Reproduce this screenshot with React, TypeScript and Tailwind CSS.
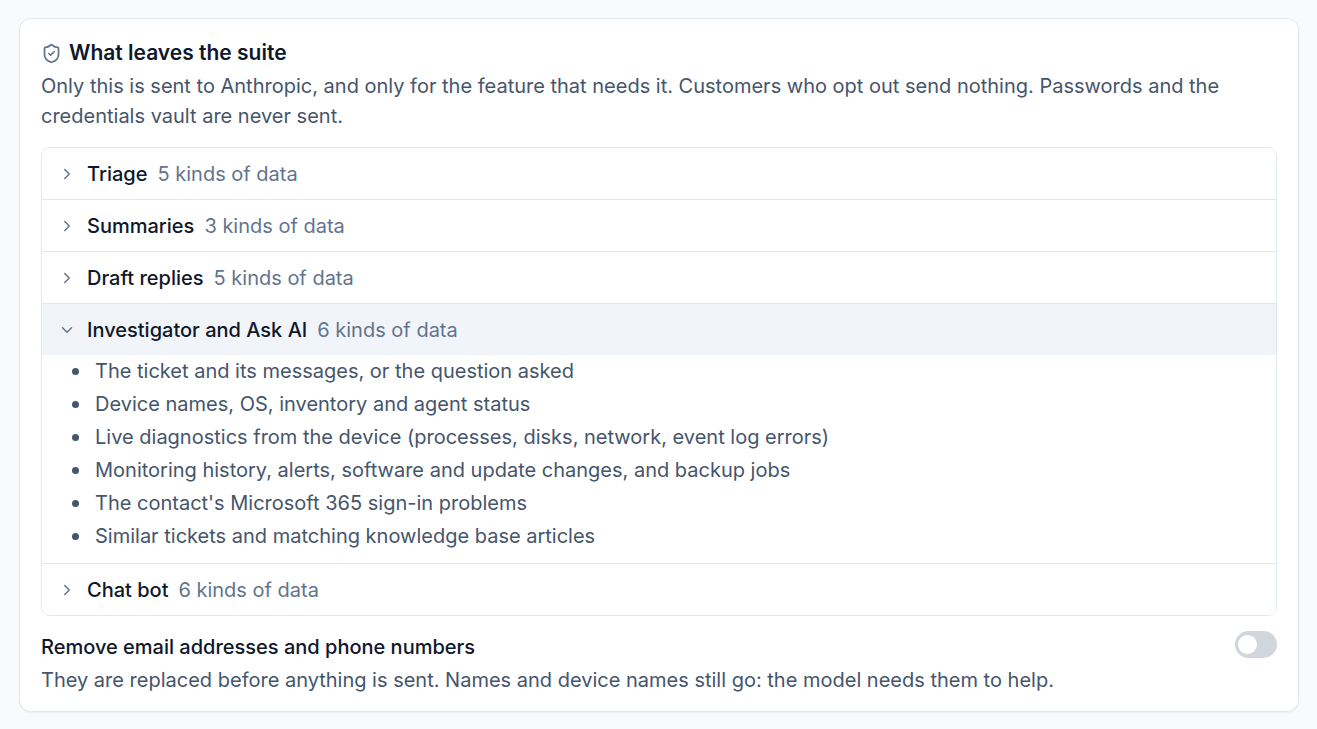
import { useState } from "react";
import { ChevronDown, ChevronRight, ShieldCheck } from "lucide-react";

type Feature = { name: string; items: string[]; count: number };

const features: Feature[] = [
  { name: "Triage", count: 5, items: [] },
  { name: "Summaries", count: 3, items: [] },
  { name: "Draft replies", count: 5, items: [] },
  {
    name: "Investigator and Ask AI",
    count: 6,
    items: [
      "The ticket and its messages, or the question asked",
      "Device names, OS, inventory and agent status",
      "Live diagnostics from the device (processes, disks, network, event log errors)",
      "Monitoring history, alerts, software and update changes, and backup jobs",
      "The contact's Microsoft 365 sign-in problems",
      "Similar tickets and matching knowledge base articles",
    ],
  },
  { name: "Chat bot", count: 6, items: [] },
];

function FeatureRow({ feature, open, onToggle }: { feature: Feature; open: boolean; onToggle: () => void }) {
  const Chevron = open ? ChevronDown : ChevronRight;
  return (
    <li>
      <button
        type="button"
        aria-expanded={open}
        onClick={onToggle}
        className={`flex w-full items-center px-4 pt-3 pb-[11px] text-left text-[20px] leading-7 ${open ? "bg-slate-100" : "bg-white"}`}
      >
        <Chevron className="mr-[11px] size-[18px] shrink-0 text-slate-500" strokeWidth={2} />
        <span className="mr-[10px] font-medium text-slate-900">{feature.name}</span>
        <span className="text-slate-500">{feature.count} kinds of data</span>
      </button>
      {open && feature.items.length > 0 && (
        <ul className="pb-[10px] pl-[30px] text-[20px] leading-[33px] text-slate-600">
          {feature.items.map((item) => (
            <li
              key={item}
              className="flex items-center gap-4 before:size-[7px] before:shrink-0 before:rounded-full before:bg-slate-600"
            >
              {item}
            </li>
          ))}
        </ul>
      )}
    </li>
  );
}

export default function App() {
  const [openName, setOpenName] = useState("Investigator and Ask AI");
  const [redact, setRedact] = useState(false);

  return (
    <main className="min-h-screen bg-slate-50 py-[18px] pr-[18px] pl-[19px] font-['Inter',sans-serif] antialiased">
      <section className="rounded-xl border border-slate-200 bg-white px-[21px] pt-5 pb-[14px] shadow-xs">
        <h2 className="flex items-center gap-[7px] text-[21px] leading-7 font-semibold text-slate-900">
          <ShieldCheck className="size-[21px] text-slate-500" strokeWidth={2} />
          What leaves the suite
        </h2>
        <p className="mt-1 text-[20px] leading-[30px] text-slate-600">
          Only this is sent to Anthropic, and only for the feature that needs it. Customers who opt out send nothing.
          Passwords and the credentials vault are never sent.
        </p>
        <ul className="mt-4 divide-y divide-slate-200 overflow-hidden rounded-[9px] border border-slate-200">
          {features.map((feature) => (
            <FeatureRow
              key={feature.name}
              feature={feature}
              open={openName === feature.name}
              onToggle={() => setOpenName(openName === feature.name ? "" : feature.name)}
            />
          ))}
        </ul>
        <div className="mt-[15px] flex items-start justify-between gap-6 text-[20px] leading-[33px]">
          <div>
            <label htmlFor="redact" className="block font-medium text-slate-900">
              Remove email addresses and phone numbers
            </label>
            <p id="redact-help" className="text-slate-600">
              They are replaced before anything is sent. Names and device names still go: the model needs them to help.
            </p>
          </div>
          <input
            id="redact"
            type="checkbox"
            role="switch"
            aria-describedby="redact-help"
            checked={redact}
            onChange={(event) => setRedact(event.target.checked)}
            className="h-[27px] w-[42px] shrink-0 appearance-none rounded-full bg-gray-300 px-[3px] py-1 before:block before:size-[19px] before:rounded-full before:bg-white checked:bg-blue-600 checked:before:translate-x-4"
          />
        </div>
      </section>
    </main>
  );
}
